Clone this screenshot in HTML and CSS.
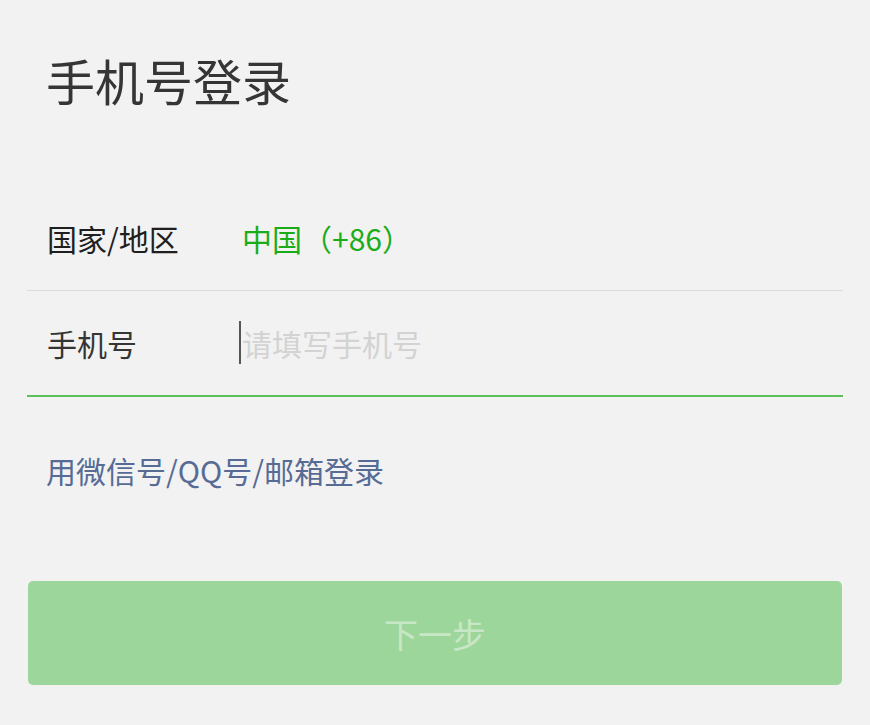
FILE: index.html
```html
<!DOCTYPE html>
<html lang="zh-CN">
<head>
<meta charset="utf-8">
<title>手机号登录</title>
<link rel="stylesheet" href="styles.css">
</head>
<body>
<main class="page">
  <h1 class="title">手机号登录</h1>
  <div class="form">
    <div class="row row-country">
      <span class="label">国家/地区</span>
      <span class="value">中国（+86）</span>
    </div>
    <div class="row row-phone">
      <span class="label">手机号</span>
      <span class="input"><span class="caret"></span><span class="placeholder">请填写手机号</span></span>
    </div>
  </div>
  <a class="alt-link">用微信号/QQ号/邮箱登录</a>
  <button class="next" type="button">下一步</button>
</main>
</body>
</html>
```

FILE: styles.css
```css
html, body {
  margin: 0;
  padding: 0;
  background: #f2f2f2;
}
body {
  font-family: "Noto Sans CJK SC", "Noto Sans", sans-serif;
  width: 870px;
  height: 725px;
  overflow: hidden;
}
.page {
  display: flex;
  flex-direction: column;
  padding-top: 56px;
}
.title {
  margin: 0 0 0 46px;
  font-size: 49px;
  line-height: 48px;
  font-weight: 400;
  color: #353535;
}
.form {
  margin: 82px 27px 0 27px;
  display: flex;
  flex-direction: column;
}
.row {
  display: flex;
  align-items: center;
  height: 104px;
  padding-left: 20px;
  font-size: 30px;
  line-height: 30px;
}
.row-country {
  border-bottom: 1px solid #dcdcdc;
}
.row-phone {
  border-bottom: 2px solid #5bc158;
}
.label {
  width: 195px;
  flex: none;
  color: #1f1f1f;
}
.row-phone .label {
  color: #353535;
}
.value {
  color: #1aad19;
}
.input {
  display: flex;
  align-items: center;
  position: relative;
}
.caret {
  position: absolute;
  left: -3px;
  top: -7px;
  width: 1.5px;
  height: 43px;
  background: #555;
}
.placeholder {
  color: #d3d3d3;
}
.alt-link {
  margin: 58px 0 0 46px;
  font-size: 30px;
  line-height: 30px;
  color: #576b95;
  cursor: pointer;
}
.next {
  margin: 96px 28px 0 28px;
  height: 104px;
  border: none;
  border-radius: 5px;
  background: #9dd69a;
  color: rgba(255, 255, 255, 0.45);
  font-family: inherit;
  font-size: 34px;
  padding: 0;
}
```
